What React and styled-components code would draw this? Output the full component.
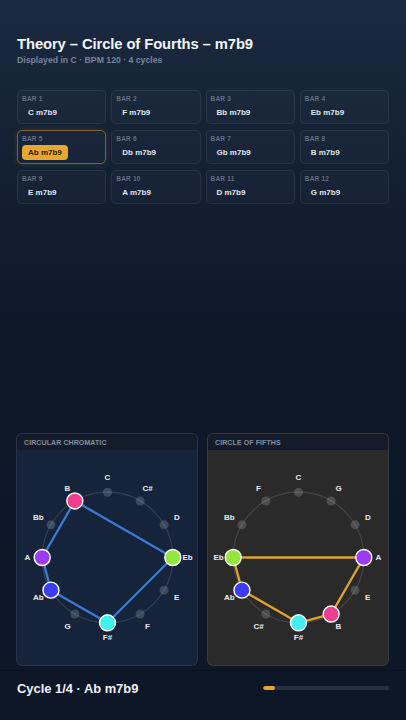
import React from 'react';
import styled, { createGlobalStyle } from 'styled-components';

const Global = createGlobalStyle`
  html, body { margin: 0; padding: 0; background: #0e1727; }
  body { font-family: "Liberation Sans", Arial, Helvetica, sans-serif; }
  * { box-sizing: border-box; }
`;

const Page = styled.div`
  width: 406px;
  height: 720px;
  display: flex;
  flex-direction: column;
  padding-bottom: 15px;
  background: linear-gradient(180deg, #1b2a3f 0%, #142034 22%, #0f1829 45%, #0e1727 100%);
  color: #fff;
  overflow: hidden;
`;

const Header = styled.header`
  padding: 35px 17px 0;
`;

const Title = styled.h1`
  margin: 0;
  font-size: 14.8px;
  line-height: 18px;
  font-weight: 700;
  color: #f2f4f7;
  letter-spacing: -0.1px;
`;

const Subtitle = styled.div`
  margin-top: 1px;
  font-size: 8.7px;
  line-height: 12px;
  font-weight: 700;
  color: #78829a;
`;

const BarGrid = styled.div`
  margin: 24px 17px 0;
  display: grid;
  grid-template-columns: repeat(4, 1fr);
  column-gap: 5px;
  row-gap: 6px;
`;

const Card = styled.div`
  height: 34px;
  border-radius: 5px;
  padding: 3px 4px;
  display: flex;
  flex-direction: column;
  gap: 1px;
  background: rgba(255, 255, 255, 0.02);
  border: ${p => (p.$active ? '1.5px solid #7d6531' : '1px solid rgba(255,255,255,0.07)')};
  box-shadow: ${p => (p.$active ? '0 0 6px rgba(232,165,42,0.15)' : 'none')};
`;

const BarLabel = styled.div`
  font-size: 6.5px;
  line-height: 9px;
  font-weight: 700;
  color: #646e80;
  letter-spacing: 0.2px;
`;

const Chord = styled.div`
  align-self: flex-start;
  height: 16px;
  padding: 0 6px;
  border-radius: 4px;
  display: flex;
  align-items: center;
  font-size: 8px;
  font-weight: 700;
  margin-top: ${p => (p.$active ? '1px' : '0')};
  color: ${p => (p.$active ? '#2b1d05' : '#e4e8ef')};
  background: ${p => (p.$active ? '#e8a82c' : 'transparent')};
`;

const Spacer = styled.div`
  flex: 1;
`;

const Panels = styled.div`
  height: 233px;
  margin: 0 17px 4px 16px;
  display: grid;
  grid-template-columns: 1fr 1fr;
  column-gap: 9px;
`;

const Panel = styled.section`
  border-radius: 6px;
  overflow: hidden;
  border: 1px solid rgba(255, 255, 255, 0.07);
  display: flex;
  flex-direction: column;
  background: ${p => p.$bg};
`;

const PanelHead = styled.div`
  height: 16px;
  flex: none;
  padding-left: 7px;
  display: flex;
  align-items: center;
  background: #141c2b;
  font-size: 7px;
  font-weight: 700;
  color: #848d9f;
  letter-spacing: 0.1px;
`;

const PanelBody = styled.div`
  flex: 1;
  display: flex;
  justify-content: center;
`;

const Footer = styled.footer`
  height: 35px;
  border-top: 1px solid rgba(0, 0, 0, 0.18);
  padding: 0 17px;
  display: flex;
  align-items: center;
  justify-content: space-between;
`;

const FooterText = styled.div`
  font-size: 12.9px;
  font-weight: 700;
  color: #eef1f5;
`;

const Track = styled.div`
  width: 126px;
  height: 4px;
  border-radius: 2px;
  background: #283142;
  overflow: hidden;
`;

const Fill = styled.div`
  height: 100%;
  border-radius: 2px;
  background: #e3a52c;
`;

const bars = ['C', 'F', 'Bb', 'Eb', 'Ab', 'Db', 'Gb', 'B', 'E', 'A', 'D', 'G'];
const activeBar = 4;

const NOTE_COLORS = {
  B: '#ee3e8e',
  Eb: '#93e63c',
  'F#': '#42efec',
  Ab: '#3c3cf0',
  A: '#9b3cf0',
};

const CHROMATIC = ['C', 'C#', 'D', 'Eb', 'E', 'F', 'F#', 'G', 'Ab', 'A', 'Bb', 'B'];
const FIFTHS = ['C', 'G', 'D', 'A', 'E', 'B', 'F#', 'C#', 'Ab', 'Eb', 'Bb', 'F'];

function NoteCircle({ order, lineColor }) {
  const cx = 90.5;
  const cy = 107.5;
  const r = 65.3;
  const lr = 80;
  const pts = order.map((n, i) => {
    const a = (i * 30 * Math.PI) / 180;
    return {
      n,
      x: cx + r * Math.sin(a),
      y: cy - r * Math.cos(a),
      lx: cx + lr * Math.sin(a),
      ly: cy - lr * Math.cos(a),
    };
  });
  const active = pts.filter(p => NOTE_COLORS[p.n]);
  const poly = active.map(p => `${p.x},${p.y}`).join(' ');
  return (
    <svg width="180" height="215" viewBox="0 0 180 215">
      <circle cx={cx} cy={cy} r={r} fill="none" stroke="rgba(255,255,255,0.13)" strokeWidth="1.2" />
      <polygon points={poly} fill="none" stroke={lineColor} strokeWidth="2.3" strokeLinejoin="round" />
      {pts.map(p =>
        NOTE_COLORS[p.n] ? (
          <circle key={p.n} cx={p.x} cy={p.y} r="8" fill={NOTE_COLORS[p.n]} stroke="#ffffff" strokeWidth="1.4" />
        ) : (
          <circle key={p.n} cx={p.x} cy={p.y} r="4.5" fill="rgba(255,255,255,0.17)" />
        )
      )}
      {pts.map(p => (
        <text
          key={'l' + p.n}
          x={p.lx}
          y={p.ly}
          textAnchor="middle"
          dominantBaseline="central"
          fontSize="8"
          fontWeight="700"
          fill="#e9ecf1"
          fontFamily='"Liberation Sans", Arial, sans-serif'
        >
          {p.n}
        </text>
      ))}
    </svg>
  );
}

export default function App() {
  const progress = 0.095;
  return (
    <>
      <Global />
      <Page>
        <Header>
          <Title>Theory – Circle of Fourths – m7b9</Title>
          <Subtitle>Displayed in C · BPM 120 · 4 cycles</Subtitle>
        </Header>
        <BarGrid>
          {bars.map((b, i) => (
            <Card key={i} $active={i === activeBar}>
              <BarLabel>BAR {i + 1}</BarLabel>
              <Chord $active={i === activeBar}>{b} m7b9</Chord>
            </Card>
          ))}
        </BarGrid>
        <Spacer />
        <Panels>
          <Panel $bg="#15243b">
            <PanelHead>CIRCULAR CHROMATIC</PanelHead>
            <PanelBody>
              <NoteCircle order={CHROMATIC} lineColor="#3a7ad4" />
            </PanelBody>
          </Panel>
          <Panel $bg="#2a2a2b">
            <PanelHead>CIRCLE OF FIFTHS</PanelHead>
            <PanelBody>
              <NoteCircle order={FIFTHS} lineColor="#e2a22e" />
            </PanelBody>
          </Panel>
        </Panels>
        <Footer>
          <FooterText>Cycle 1/4 · Ab m7b9</FooterText>
          <Track>
            <Fill style={{ width: `${progress * 100}%` }} />
          </Track>
        </Footer>
      </Page>
    </>
  );
}
